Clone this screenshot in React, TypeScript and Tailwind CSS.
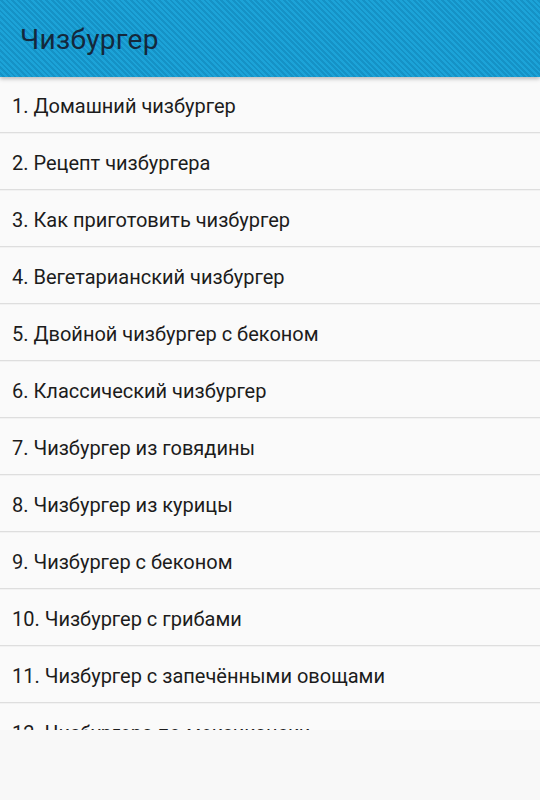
import React from "react";

const items = [
  "1. Домашний чизбургер",
  "2. Рецепт чизбургера",
  "3. Как приготовить чизбургер",
  "4. Вегетарианский чизбургер",
  "5. Двойной чизбургер с беконом",
  "6. Классический чизбургер",
  "7. Чизбургер из говядины",
  "8. Чизбургер из курицы",
  "9. Чизбургер с беконом",
  "10. Чизбургер с грибами",
  "11. Чизбургер с запечёнными овощами",
  "12. Чизбургера по-мексикански",
];

const App = () => {
  return (
    <div className="w-[540px] h-[800px] flex flex-col bg-[#f8f8f8] font-['Roboto',sans-serif] overflow-hidden">
      {/* Action bar */}
      <div className="relative z-10 h-[77px] shrink-0 flex items-center px-[20px] bg-[repeating-linear-gradient(45deg,#1ca3d8_0px,#1ca3d8_2px,#1592c6_2px,#1592c6_4px)] shadow-[0_2px_4px_rgba(0,0,0,0.25)]">
        <h1 className="text-[28px] tracking-[0.3px] text-[#14283c] leading-none mt-[2px]">Чизбургер</h1>
      </div>

      {/* List */}
      <div className="h-[653px] overflow-hidden">
        {items.map((item) => (
          <div key={item}>
            <div className="h-[55px] flex items-center pt-[3px] px-[12px] bg-[#fafafa] text-[20px] text-[#1c1c1c]">
              {item}
            </div>
            <div className="h-[1px] bg-[#dedede]" />
            <div className="h-[1px] bg-[#f2f2f2]" />
          </div>
        ))}
      </div>
    </div>
  );
};

export default App;
